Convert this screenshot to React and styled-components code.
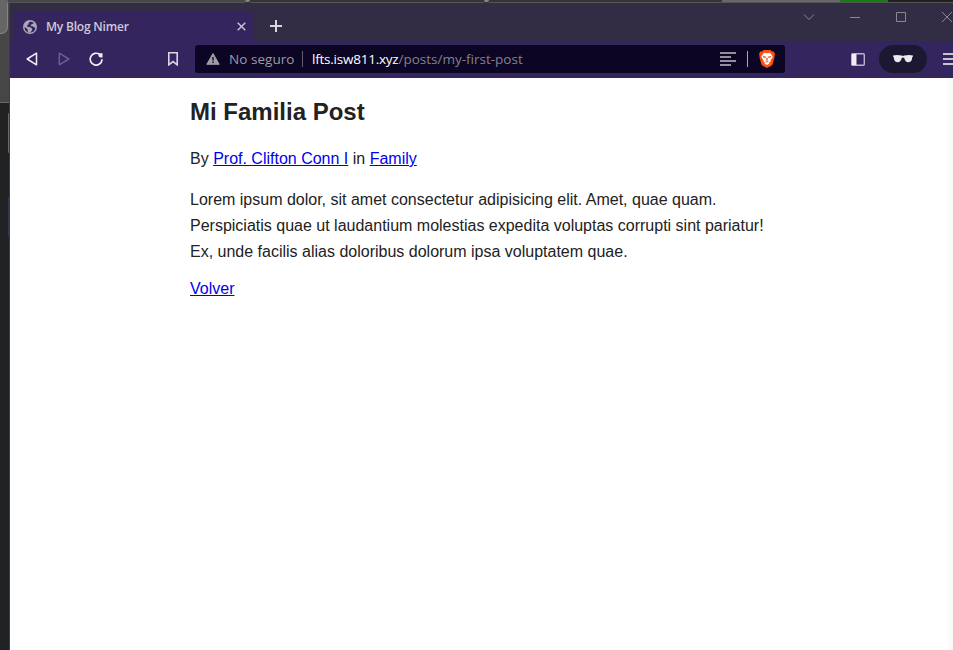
import React from 'react';
import styled, { createGlobalStyle } from 'styled-components';

const GlobalStyle = createGlobalStyle`
  * { box-sizing: border-box; }
  body { margin: 0; overflow: hidden; }
  svg { display: block; flex: none; }
`;

const Desktop = styled.div`
  display: grid;
  grid-template: 3px 647px / 10px 943px;
  width: 953px;
  height: 650px;
  overflow: hidden;
  background: #202122;
`;

const TopEdge = styled.div`
  grid-column: 1 / 3;
  display: flex;
  background: #3a3a3a;
`;

const EdgePiece = styled.div`
  width: ${(p) => p.$w}px;
  height: ${(p) => p.$h || 3}px;
  border-bottom: ${(p) => (p.$line ? '1px solid #555558' : 'none')};
  border-radius: ${(p) => p.$r || '0'};
  background: ${(p) => p.$c};
`;

const LeftEdge = styled.div`
  display: flex;
  flex-direction: column;
  align-items: flex-end;
  border-right: 1px solid #3d3c42;
  background: #202122;
`;

const DimTab = styled.div`
  width: 9px;
  height: 100px;
  border-bottom: 1px solid #6b6b6b;
  background: linear-gradient(#474747, #464646);
`;

const DimTabCap = styled.div`
  width: 8px;
  height: 31px;
  margin-right: 1px;
  border-right: 1px solid #858585;
  border-bottom: 1px solid #858585;
  border-bottom-right-radius: 7px;
  background: #666;
`;

const SideMark = styled.div`
  width: 1px;
  height: 40px;
  margin-top: ${(p) => p.$top}px;
  border-radius: 3px 0 0 3px;
  background: ${(p) => p.$c};
`;

const BrowserWindow = styled.div`
  display: flex;
  flex-direction: column;
  background: #fff;
  overflow: hidden;
`;

const TabBar = styled.div`
  display: flex;
  height: 38px;
  flex: none;
  padding-left: 4px;
  background: #322d44;
`;

const Tab = styled.div`
  display: flex;
  align-items: center;
  width: 240px;
  height: 29px;
  margin-top: 9px;
  padding: 0 8px 0 9px;
  border-radius: 3px 3px 0 0;
  background: #34255f;
`;

const TabTitle = styled.span`
  flex: 1;
  margin-left: 9px;
  color: #cdc9d7;
  font: 600 12px/16px "Open Sans", sans-serif;
  letter-spacing: -0.2px;
  white-space: nowrap;
`;

const NewTab = styled.div`
  margin: 17px 0 0 16px;
`;

const WindowControls = styled.div`
  display: flex;
  align-items: center;
  gap: 34px;
  height: 28px;
  margin-left: 521px;
`;

const Toolbar = styled.div`
  display: flex;
  align-items: center;
  height: 37px;
  flex: none;
  padding-bottom: 1px;
  background: #34255f;
`;

const NavButtons = styled.div`
  display: flex;
  align-items: center;
  width: 185px;
  flex: none;
  padding-left: 15px;
  gap: 18px;
`;

const BookmarkSlot = styled.div`
  margin-left: 45px;
`;

const AddressBar = styled.div`
  display: flex;
  align-items: center;
  width: 590px;
  height: 28px;
  flex: none;
  padding: 0 10px 0 11px;
  border-radius: 3px;
  background: #0c0523;
  font: 400 13.5px/18px "Open Sans", sans-serif;
  white-space: nowrap;
`;

const Security = styled.span`
  width: 66px;
  margin-left: 9px;
  color: #9c9aa8;
  letter-spacing: 0.05px;
`;

const Divider = styled.span`
  width: 1px;
  height: 16px;
  margin: ${(p) => p.$m};
  background: ${(p) => p.$c};
`;

const Host = styled.span`
  color: #fff;
  letter-spacing: -0.23px;
`;

const Path = styled.span`
  flex: 1;
  color: #84818f;
`;

const PrivatePill = styled.div`
  display: flex;
  align-items: center;
  justify-content: center;
  width: 48px;
  height: 28px;
  flex: none;
  margin: 0 16px 0 14px;
  border-radius: 14px;
  background: #1d1832;
`;

const PanelSlot = styled.div`
  margin-left: 66px;
`;

const Page = styled.main`
  flex: 1;
  padding: 15px 0 0 180px;
  background: linear-gradient(to right, #fff 936px, #f7f7f7 943px);
  color: #222;
  font: 16px/26px "Liberation Sans", Arial, sans-serif;
`;

const Title = styled.h1`
  margin: 0;
  font-size: 24px;
  line-height: 38px;
`;

const Paragraph = styled.p`
  width: 600px;
  margin: ${(p) => p.$top}px 0 0;
`;

const Link = styled.a`
  color: #0000ee;
  text-decoration: underline;
`;

const GlobeIcon = () => (
  <svg width="14" height="14" viewBox="0 0 14 14">
    <circle cx="7" cy="7" r="7" fill="#aaa9b4" />
    <path d="M7.2 1.5 5.5 3.2v1.4L4 5.2 4.6 7l3 .2 1.5 1.6v1.4l-2 2.3-2.2-.6-.3-2.6-3-2.5.2 2.4a5.6 5.6 0 0 0 5.3 3.4 5.6 5.6 0 0 0 5.3-4.7l-1.5-1-1.6-.7-1.8-.3 1-1.6 2-.7V2.5Z" fill="#34255f" />
  </svg>
);

const TabCloseIcon = () => (
  <svg width="9" height="9" viewBox="0 0 9 9" stroke="#c9c5d3" strokeWidth="1.4">
    <path d="m.7.7 7.6 7.6M8.3.7.7 8.3" />
  </svg>
);

const PlusIcon = () => (
  <svg width="12" height="12" viewBox="0 0 12 12" fill="#d8d7dc">
    <path d="M5 0h2v5h5v2H7v5H5V7H0V5h5Z" />
  </svg>
);

const TriangleIcon = ({ flip, color }) => (
  <svg width="14" height="16" viewBox="0 0 14 16" fill="none" stroke={color} strokeWidth="1.5" strokeLinejoin="round">
    <path d={flip ? 'M2.3 2.2v11.6L11.8 8Z' : 'M11.5 2.2v11.6L2.2 8Z'} />
  </svg>
);

const ReloadIcon = () => (
  <svg width="16" height="16" viewBox="0 0 16 16">
    <path d="M10.6 3.4A5.9 5.9 0 1 0 13 8.8" fill="none" stroke="#f0eef5" strokeWidth="1.7" strokeLinecap="round" />
    <path d="M9.5 2.2h4v4.2h-1.8a2.2 2.2 0 0 1-2.2-2.2Z" fill="#f0eef5" />
  </svg>
);

const BookmarkIcon = () => (
  <svg width="10" height="14" viewBox="0 0 10 14" fill="none" stroke="#d9d5e3" strokeWidth="1.6">
    <path d="M.8.8h8.4v12L5 9.5.8 12.8Z" />
  </svg>
);

const WarningIcon = () => (
  <svg width="14" height="12" viewBox="0 0 14 12">
    <path d="M7 .5 13.2 11.3H.8Z" fill="#9f9da8" stroke="#9f9da8" strokeLinejoin="round" />
    <path d="M6.3 4h1.4v3.5H6.3Zm0 4.5h1.4V10H6.3Z" fill="#0c0523" />
  </svg>
);

const ReaderIcon = () => (
  <svg width="16" height="14" viewBox="0 0 16 14" fill="#918f9b">
    <path d="M0 0h16v2H0ZM0 4h11v2H0ZM0 8h16v2H0ZM0 12h11v2H0Z" />
  </svg>
);

const BraveIcon = () => (
  <svg width="16" height="18" viewBox="0 0 16 18">
    <path d="M4.5 0h7l1.5 1.6 1.7-.1L16 4l-.6 2 .2 1.1-2 7.2c-.3 1-1.2 1.7-5.6 3.7-4.4-2-5.3-2.7-5.6-3.7l-2-7.2L.6 6 0 4l1.3-2.5 1.7.1Z" fill="#fb4f14" />
    <path d="M5 2.7 8 3.3l3-.6 2.7 3.6-.7 1.9-1.6 2.1.3 1.4-2 .9 1 .8L8 15l-2.7-1.6 1-.8-2-.9.3-1.4L3 8.2l-.7-1.9Z" fill="#fff" />
    <path d="m3.6 5.8 3.5.9-.5 1.3-2.1-.5ZM12.4 5.8l-3.5.9.5 1.3 2.1-.5ZM7.5 8h1l.4 2.2-.9.6-.9-.6ZM5.9 11.6 8 12.5l2.1-.9L8 11.2Z" fill="#fb4f14" />
  </svg>
);

const PanelIcon = () => (
  <svg width="14" height="13" viewBox="0 0 14 13">
    <rect x=".7" y=".7" width="12.6" height="11.6" rx="1" fill="none" stroke="#b9b3c8" strokeWidth="1.4" />
    <path d="M1 1h4.5v11H1Z" fill="#f1eff4" />
  </svg>
);

const GlassesIcon = () => (
  <svg width="20" height="8" viewBox="0 0 20 8" fill="#ecebef">
    <path d="M0 .4Q4.5-.3 8.7.6L10 1l1.3-.4Q15.5-.3 20 .4v1.2l-.7.5C19 5.5 18 7.3 15.5 7.3c-2.6 0-3.7-1.7-4.2-4.3L10 2.4l-1.3.6c-.5 2.6-1.6 4.3-4.2 4.3C2 7.3 1 5.5.7 2.1L0 1.6Z" />
  </svg>
);

const MenuIcon = () => (
  <svg width="14" height="12" viewBox="0 0 14 12" fill="#c8c4d3">
    <path d="M0 0h14v2H0ZM0 5h14v2H0ZM0 10h14v2H0Z" />
  </svg>
);

const ControlIcon = ({ d }) => (
  <svg width="12" height="12" viewBox="0 0 12 12" fill="none" stroke="#8b8795" strokeWidth="1">
    <path d={d} />
  </svg>
);

const controls = ['m1 3.5 5 5 5-5', 'M1 6.5h10', 'M1.5 1.5h9v9h-9Z', 'm1 1 10 10M11 1 1 11'];

export default function App() {
  return (
    <Desktop>
      <GlobalStyle />
      <TopEdge>
        <EdgePiece $w={8} $c="#666" />
        <EdgePiece $w={237} $c="#484848" $line />
        <EdgePiece $w={5} $c="#858585" $h={2} $r="0 0 3px 3px" />
        <EdgePiece $w={234} $c="#353535" $line />
        <EdgePiece $w={5} $c="#858585" $h={2} $r="0 0 3px 3px" />
        <EdgePiece $w={233} $c="#353535" $line />
        <EdgePiece $w={118} $c="#686868" $line />
        <EdgePiece $w={48} $c="#128012" $line />
        <EdgePiece $w={65} $c="#202020" $line />
      </TopEdge>
      <LeftEdge>
        <DimTab>
          <DimTabCap />
        </DimTab>
        <SideMark $top={10} $c="#6a6a6a" />
        <SideMark $top={44} $c="#353650" />
      </LeftEdge>
      <BrowserWindow>
        <TabBar>
          <Tab>
            <GlobeIcon />
            <TabTitle>My Blog Nimer</TabTitle>
            <TabCloseIcon />
          </Tab>
          <NewTab>
            <PlusIcon />
          </NewTab>
          <WindowControls>
            {controls.map((d) => (
              <ControlIcon key={d} d={d} />
            ))}
          </WindowControls>
        </TabBar>
        <Toolbar>
          <NavButtons>
            <TriangleIcon color="#f0eef5" />
            <TriangleIcon flip color="#6b5c91" />
            <ReloadIcon />
            <BookmarkSlot>
              <BookmarkIcon />
            </BookmarkSlot>
          </NavButtons>
          <AddressBar>
            <WarningIcon />
            <Security>No seguro</Security>
            <Divider $m="0 9px 0 7px" $c="#62606d" />
            <Host>lfts.isw811.xyz</Host>
            <Path>/posts/my-first-post</Path>
            <ReaderIcon />
            <Divider $m="0 11px" $c="#aaa8b0" />
            <BraveIcon />
          </AddressBar>
          <PanelSlot>
            <PanelIcon />
          </PanelSlot>
          <PrivatePill>
            <GlassesIcon />
          </PrivatePill>
          <MenuIcon />
        </Toolbar>
        <Page>
          <Title>Mi Familia Post</Title>
          <Paragraph $top={15}>
            By <Link href="#author">Prof. Clifton Conn I</Link> in <Link href="#family">Family</Link>
          </Paragraph>
          <Paragraph $top={15}>
            Lorem ipsum dolor, sit amet consectetur adipisicing elit. Amet, quae quam. Perspiciatis quae ut laudantium
            molestias expedita voluptas corrupti sint pariatur! Ex, unde facilis alias doloribus dolorum ipsa voluptatem
            quae.
          </Paragraph>
          <Paragraph $top={11}>
            <Link href="#back">Volver</Link>
          </Paragraph>
        </Page>
      </BrowserWindow>
    </Desktop>
  );
}
